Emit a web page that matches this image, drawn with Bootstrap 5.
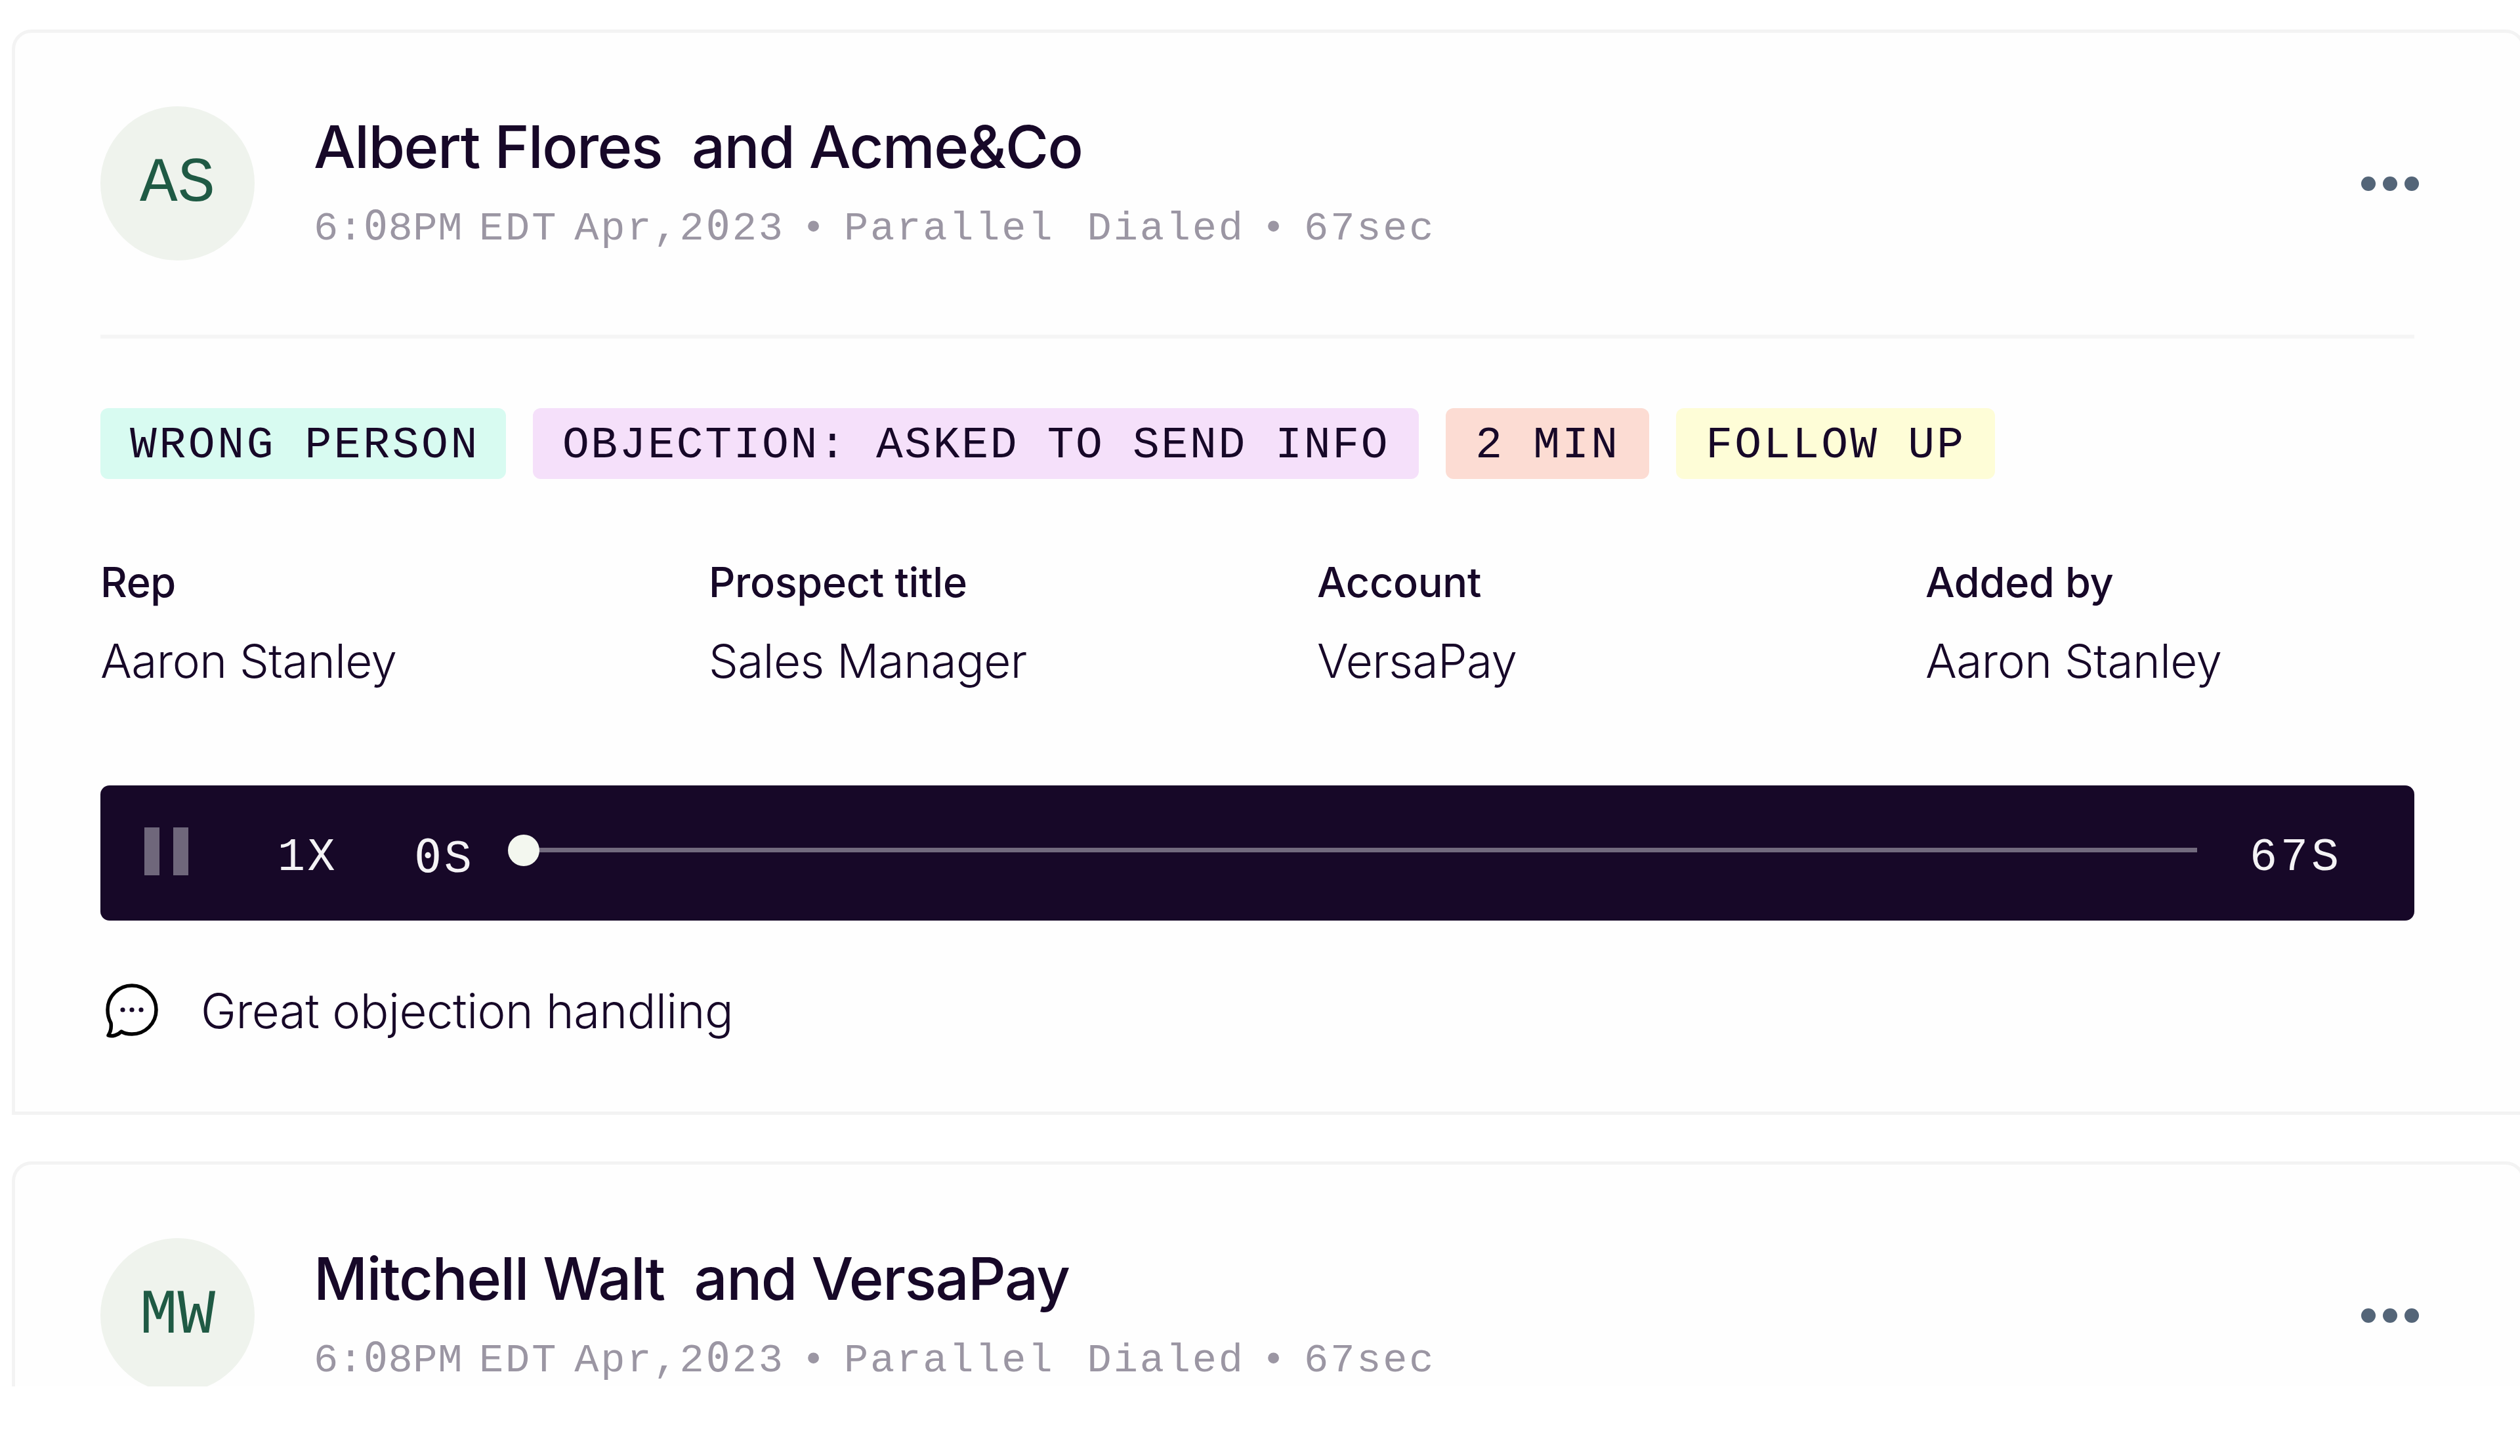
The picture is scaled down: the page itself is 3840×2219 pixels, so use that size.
<!DOCTYPE html>
<html lang="en">
<head>
<meta charset="utf-8">
<title>Call list</title>
<link href="https://cdn.jsdelivr.net/npm/bootstrap@5.3.0/dist/css/bootstrap.min.css" rel="stylesheet">
<style>
html,body{background:#fff;margin:0}
.call-viewport{height:2113px;overflow:hidden;padding:45px 0 0 18px;font-family:"Inter","Liberation Sans",sans-serif;color:#170828}
.call-card{width:3830px;border:5px solid #f3f3f3;border-radius:30px 30px 0 0;padding:112px 164px 113px 130px;margin-bottom:71px;background:#fefefe}
.call-avatar{width:235px;height:235px;padding-top:3px;background:#eff3ed;color:#1f5a44;font:400 96px/1 "Liberation Mono",monospace;flex:none}
.call-headtext{margin-left:90px;padding-bottom:8px}
.call-title{font-size:90px;line-height:120px;font-weight:500;letter-spacing:-1.5px;margin:0}
.call-meta{font:400 62px/80px "Liberation Mono",monospace;color:#9b96a3;letter-spacing:2.85px;word-spacing:-15px;margin-top:20px;margin-bottom:-1px;white-space:pre}
.call-metatime{letter-spacing:.6px}
.call-zero{font-family:"DejaVu Sans Mono",monospace}
.call-more{margin-right:-7px;flex:none}
.call-rule{height:6px;background:#f5f5f5;margin:113px 0 106px}
.call-tags{gap:41px}
.call-tag{height:108px;padding:0 45px;border-radius:12px;font:400 68px/114px "Liberation Mono",monospace;letter-spacing:3.2px;white-space:pre}
.tag-mint{background:#d8fbf1;letter-spacing:3.6px;padding-right:40px}
.tag-lilac{background:#f5e0fa;letter-spacing:2.65px}
.tag-peach{background:#fcdcd3}
.tag-lemon{background:#fefdd7}
.call-fields{--bs-gutter-x:182px;margin-top:117px}
.call-label{font-size:63px;line-height:80px;font-weight:500;letter-spacing:-.3px}
.call-value{font-size:71px;line-height:80px;font-weight:300;margin-top:40px;letter-spacing:-.5px}
.call-player{height:206px;margin-top:150px;background:#170828;border-radius:14px;padding:0 110px 0 67px;color:#f4f3f5;font:400 70px/1 "Liberation Mono",monospace;letter-spacing:3.5px;white-space:nowrap}
.player-pause{flex:none;margin-right:136px;margin-top:-6px;width:67px;height:73px}
.player-text{position:relative;top:8px}
.player-speed{width:208px;flex:none}
.player-start{width:90px;flex:none;margin-right:77px}
.player-track{flex:1;height:7px;background:#726a7e;position:relative;top:-5px;margin-right:80px}
.player-thumb{position:absolute;left:-24px;top:-20px;width:48px;height:48px;background:#f3f7ef;border-radius:50%}
.player-end{letter-spacing:5px}
.call-note{margin-top:98px;height:80px}
.call-noteicon{flex:none;margin:0 65px 0 8px}
.call-notetext{font-size:72.5px;line-height:80px;font-weight:300;letter-spacing:-.5px}
</style>
</head>
<body>
<div class="call-viewport">

  <section class="card call-card">
    <div class="d-flex align-items-center">
      <div class="call-avatar rounded-circle d-flex align-items-center justify-content-center">AS</div>
      <div class="call-headtext flex-grow-1">
        <h2 class="call-title">Albert Flores&nbsp; and Acme&amp;Co</h2>
        <div class="call-meta"><span class="call-metatime">6:<span class="call-zero">0</span>8PM</span> EDT Apr,2<span class="call-zero">0</span>23 • Parallel  Dialed • 67sec</div>
      </div>
      <svg class="call-more" width="88" height="24" viewBox="0 0 88 24" aria-label="More"><g fill="#546578"><circle cx="11" cy="12" r="11"/><circle cx="44" cy="12" r="11"/><circle cx="77" cy="12" r="11"/></g></svg>
    </div>
    <div class="call-rule"></div>
    <div class="d-flex call-tags">
      <span class="call-tag tag-mint">WRONG PERSON</span>
      <span class="call-tag tag-lilac">OBJECTION: ASKED TO SEND INFO</span>
      <span class="call-tag tag-peach">2 MIN</span>
      <span class="call-tag tag-lemon">FOLLOW UP</span>
    </div>
    <div class="row call-fields">
      <div class="col-3"><div class="call-label">Rep</div><div class="call-value">Aaron Stanley</div></div>
      <div class="col-3"><div class="call-label">Prospect title</div><div class="call-value">Sales Manager</div></div>
      <div class="col-3"><div class="call-label">Account</div><div class="call-value">VersaPay</div></div>
      <div class="col-3"><div class="call-label">Added by</div><div class="call-value">Aaron Stanley</div></div>
    </div>
    <div class="call-player d-flex align-items-center">
      <svg class="player-pause" viewBox="0 0 67 73" aria-label="Pause"><g fill="#6f677b"><rect width="23" height="73"/><rect x="44" width="23" height="73"/></g></svg>
      <span class="player-speed player-text">1X</span>
      <span class="player-start player-text"><span class="call-zero">0</span>S</span>
      <div class="player-track"><span class="player-thumb"></span></div>
      <span class="player-text player-end">67S</span>
    </div>
    <div class="call-note d-flex align-items-center">
      <svg class="call-noteicon" width="80" height="84" viewBox="0 0 80 84" aria-hidden="true"><path d="M40 3C60 3 77 19 77 40C77 61 60 77 40 77C33 77 28 76 24 73C18 79 10 81 4 79C8 73 9 67 8 60C4 53 3 46 3 40C3 19 20 3 40 3Z" fill="none" stroke="#000" stroke-width="5.5" stroke-linejoin="round"/><g fill="#170828"><circle cx="26" cy="40" r="3.6"/><circle cx="40" cy="40" r="3.6"/><circle cx="54" cy="40" r="3.6"/></g></svg>
      <span class="call-notetext">Great objection handling</span>
    </div>
  </section>

  <section class="card call-card">
    <div class="d-flex align-items-center">
      <div class="call-avatar rounded-circle d-flex align-items-center justify-content-center">MW</div>
      <div class="call-headtext flex-grow-1">
        <h2 class="call-title">Mitchell Walt&nbsp; and VersaPay</h2>
        <div class="call-meta"><span class="call-metatime">6:<span class="call-zero">0</span>8PM</span> EDT Apr,2<span class="call-zero">0</span>23 • Parallel  Dialed • 67sec</div>
      </div>
      <svg class="call-more" width="88" height="24" viewBox="0 0 88 24" aria-label="More"><g fill="#546578"><circle cx="11" cy="12" r="11"/><circle cx="44" cy="12" r="11"/><circle cx="77" cy="12" r="11"/></g></svg>
    </div>
  </section>

</div>
<script src="https://cdn.jsdelivr.net/npm/bootstrap@5.3.0/dist/js/bootstrap.bundle.min.js"></script>
</body>
</html>
